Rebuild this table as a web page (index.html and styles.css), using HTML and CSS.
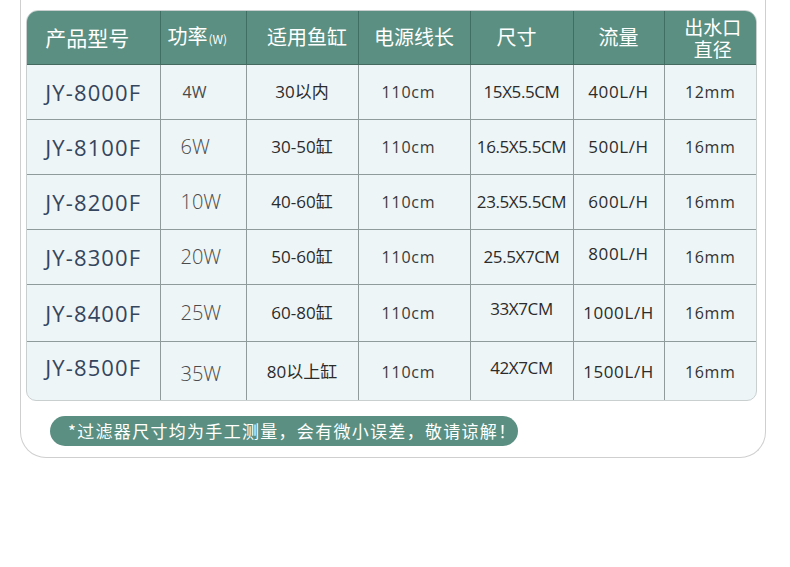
FILE: index.html
```html
<!DOCTYPE html>
<html lang="zh">
<head>
<meta charset="utf-8">
<link rel="stylesheet" href="styles.css">
</head>
<body>
<div class="card">
  <div class="table-wrap">
    <table class="spec">
      <colgroup>
        <col class="c1"><col class="c2"><col class="c3"><col class="c4"><col class="c5"><col class="c6"><col class="c7">
      </colgroup>
      <thead>
        <tr class="head">
          <th class="h-model">产品型号</th>
          <th class="pw-h">功率<small>(W)</small></th>
          <th class="h-tank">适用鱼缸</th>
          <th>电源线长</th>
          <th class="h-size">尺寸</th>
          <th>流量</th>
          <th class="two"><span class="ln">出水口</span><span class="ln">直径</span></th>
        </tr>
      </thead>
      <tbody>
        <tr class="r1">
          <td class="model">JY-8000F</td>
          <td class="pw small">4W</td>
          <td class="tank">30以内</td>
          <td class="cable">110cm</td>
          <td class="size">15X5.5CM</td>
          <td class="flow">400L/H</td>
          <td class="dia">12mm</td>
        </tr>
        <tr class="r2">
          <td class="model">JY-8100F</td>
          <td class="pw">6W</td>
          <td class="tank">30-50缸</td>
          <td class="cable">110cm</td>
          <td class="size">16.5X5.5CM</td>
          <td class="flow">500L/H</td>
          <td class="dia">16mm</td>
        </tr>
        <tr class="r3">
          <td class="model">JY-8200F</td>
          <td class="pw">10W</td>
          <td class="tank">40-60缸</td>
          <td class="cable">110cm</td>
          <td class="size">23.5X5.5CM</td>
          <td class="flow">600L/H</td>
          <td class="dia">16mm</td>
        </tr>
        <tr class="r4">
          <td class="model">JY-8300F</td>
          <td class="pw">20W</td>
          <td class="tank">50-60缸</td>
          <td class="cable">110cm</td>
          <td class="size">25.5X7CM</td>
          <td class="flow">800L/H</td>
          <td class="dia">16mm</td>
        </tr>
        <tr class="r5">
          <td class="model">JY-8400F</td>
          <td class="pw">25W</td>
          <td class="tank">60-80缸</td>
          <td class="cable">110cm</td>
          <td class="size">33X7CM</td>
          <td class="flow">1000L/H</td>
          <td class="dia">16mm</td>
        </tr>
        <tr class="r6">
          <td class="model">JY-8500F</td>
          <td class="pw">35W</td>
          <td class="tank">80以上缸</td>
          <td class="cable">110cm</td>
          <td class="size">42X7CM</td>
          <td class="flow">1500L/H</td>
          <td class="dia">16mm</td>
        </tr>
      </tbody>
    </table>
  </div>
  <div class="note">*过滤器尺寸均为手工测量，会有微小误差，敬请谅解！</div>
</div>
</body>
</html>
```

FILE: styles.css
```css
html, body {
  margin: 0;
  padding: 0;
  background: #ffffff;
}
body {
  font-family: "Noto Sans CJK SC", "Open Sans", sans-serif;
  width: 790px;
  height: 567px;
  overflow: hidden;
}
.card {
  box-sizing: border-box;
  margin-left: 20px;
  width: 746px;
  height: 458px;
  border: 1px solid #cfcfcf;
  border-top: none;
  border-radius: 0 0 26px 26px;
  padding: 10px 0 0 5px;
}
.table-wrap {
  width: 731px;
  box-sizing: border-box;
  border: 1px solid #c9cfcf;
  border-radius: 12px 12px 10px 10px;
  overflow: hidden;
  background: #eef5f6;
}
.spec {
  width: 729px;
  border-collapse: collapse;
  table-layout: fixed;
}
.c1 { width: 133px; }
.c2 { width: 86px; }
.c3 { width: 112px; }
.c4 { width: 112px; }
.c5 { width: 103px; }
.c6 { width: 91px; }
.c7 { width: 92px; }

.head { height: 53px; }
.r1, .r2, .r3, .r4 { height: 55px; }
.r5 { height: 57px; }
.r6 { height: 59px; }

.spec th {
  background: #5b8f81;
  color: #ffffff;
  font-weight: 400;
  font-size: 20px;
  line-height: 24px;
  padding: 0;
  border-right: 1px solid #3f6e62;
  border-bottom: 1px solid #44695f;
  text-align: center;
  vertical-align: middle;
  white-space: nowrap;
}
.spec th:last-child { border-right: none; }
.spec th.h-model { font-size: 21px; padding-right: 12px; }
.spec th.h-tank { padding-left: 10px; }
.spec th.h-size { padding-right: 10px; }
.spec th.pw-h { text-align: left; padding-left: 7px; }
.spec th small { font-size: 12px; margin-left: 1px; }
.spec th.two { font-size: 19px; padding: 2px 0 0 5px; }
.spec th.two .ln { display: block; line-height: 22px; height: 22px; }

.spec td {
  padding: 0;
  text-align: center;
  vertical-align: middle;
  border-right: 1px solid #8f9a9a;
  border-top: 1px solid #8f9a9a;
  white-space: nowrap;
  color: #2b2b2b;
  font-family: "Open Sans", "Noto Sans CJK SC", sans-serif;
  line-height: 24px;
}
.spec td:last-child { border-right: none; }
.spec tbody tr:first-child td { border-top: none; }

.model {
  font-size: 22px;
  letter-spacing: 1.1px;
  color: #34455e !important;
}
.pw {
  font-size: 20px;
  font-weight: 300;
  color: #4a4a4a !important;
  text-align: left !important;
  padding-left: 20px !important;
}
.pw.small { font-size: 16px; font-weight: 400; padding-left: 22px !important; }
.tank { font-size: 17px; }
.cable { font-size: 16px; letter-spacing: 0.8px; text-align: left !important; padding-left: 23px !important; color: #3a3a3a !important; }
.size { font-size: 17px; letter-spacing: -0.4px; }
.flow { font-size: 17px; letter-spacing: 0.6px; }
.dia { font-size: 16px; letter-spacing: 0.6px; color: #333 !important; }

.r4 .flow { padding-bottom: 6px !important; }
.r5 .size { padding-bottom: 8px !important; }
.r6 .model { padding-bottom: 8px !important; }
.r6 .pw { padding-top: 6px !important; }
.r6 .size { padding-bottom: 6px !important; }
.r6 .flow, .r6 .dia, .r6 .cable, .r6 .tank { padding-top: 2px !important; }

.note {
  margin: 15px 0 0 24px;
  width: 468px;
  height: 30px;
  box-sizing: border-box;
  background: #5b8f81;
  color: #ffffff;
  border-radius: 15px;
  font-size: 17px;
  line-height: 30px;
  letter-spacing: 1.3px;
  padding-left: 18px;
  white-space: nowrap;
}
```
